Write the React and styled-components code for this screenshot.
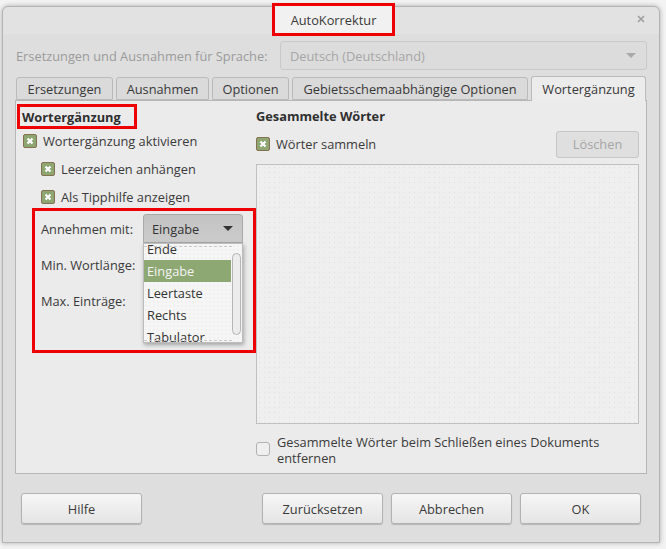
import React from "react";
import styled, { createGlobalStyle } from "styled-components";

const Global = createGlobalStyle`
  html, body { margin: 0; padding: 0; background: #f3f3f3; }
  body { font-family: "Open Sans", "Noto Sans", sans-serif; font-size: 12.8px; color: #3c3c3c; }
  * { box-sizing: border-box; }
`;

const Page = styled.div`
  width: 666px;
  height: 549px;
  padding: 6px 0 0 2px;
  background: #f3f3f3;
`;

const Window = styled.div`
  width: 658px;
  height: 537px;
  background: #dedede;
  border: 1px solid #b4b4b4;
  border-radius: 6px 6px 0 0;
  box-shadow: 0 0 5px rgba(0, 0, 0, 0.3);
  display: flex;
  flex-direction: column;
`;

const TitleBar = styled.div`
  height: 27px;
  flex: none;
  position: relative;
  background: #e2e2e2;
  border-radius: 6px 6px 0 0;
`;

const Highlight = styled.div`
  border: 3px solid #ee0000;
`;

const TitleBox = styled(Highlight)`
  position: absolute;
  left: 269px;
  top: -4px;
  width: 123px;
  height: 33px;
  background: #f1f1f1;
  display: flex;
  align-items: center;
  justify-content: center;
  color: #3a3a3a;
`;

const Close = styled.div`
  position: absolute;
  left: 634px;
  top: 8px;
  width: 8px;
  height: 8px;
  display: flex;
`;

const Body = styled.div`
  flex: 1;
  padding: 7px 12px 0 12px;
  display: flex;
  flex-direction: column;
`;

const LangRow = styled.div`
  display: flex;
  align-items: center;
  gap: 12px;
  height: 29px;
  padding-left: 1px;
`;

const DimLabel = styled.div`
  flex: none;
  width: 252px;
  color: #9b9b9b;
  white-space: nowrap;
`;

const Combo = styled.div`
  flex: 1;
  height: 29px;
  border: 1px solid #c9c9c9;
  border-radius: 3px;
  background: #dcdcdc;
  display: flex;
  align-items: center;
  justify-content: space-between;
  padding: 0 10px 0 9px;
  color: #a6a6a6;
`;

const Arrow = styled.span`
  width: 0;
  height: 0;
  border-left: 5px solid transparent;
  border-right: 5px solid transparent;
  border-top: 5px solid ${(p) => p.$c || "#a9a9a9"};
`;

const Tabs = styled.div`
  display: flex;
  gap: 3px;
  margin-top: 6px;
  padding-left: 1px;
  align-items: flex-end;
  height: 24px;
  flex: none;
`;

const Tab = styled.div`
  width: ${(p) => p.$w}px;
  height: ${(p) => (p.$active ? "25px" : "23px")};
  margin-bottom: ${(p) => (p.$active ? "-1px" : "0")};
  border: 1px solid #bababa;
  border-bottom: ${(p) => (p.$active ? "none" : "1px solid #bababa")};
  border-radius: 3px 3px 0 0;
  background: ${(p) => (p.$active ? "#ececec" : "#dadada")};
  display: flex;
  align-items: center;
  justify-content: center;
  white-space: nowrap;
  color: #383838;
  position: relative;
  z-index: ${(p) => (p.$active ? 2 : 1)};
`;

const Panel = styled.div`
  flex: none;
  height: 374px;
  border: 1px solid #b6b6b6;
  background: #ebebeb;
  display: grid;
  grid-template-columns: 240px 1fr;
  padding: 0 7px 0 0;
`;

const LeftCol = styled.div`
  display: flex;
  flex-direction: column;
`;

const SectionBox = styled(Highlight)`
  margin: 3px 0 0 1px;
  width: 120px;
  height: 25px;
  display: flex;
  align-items: center;
  padding-left: 2px;
  font-weight: 700;
  color: #2f2f2f;
`;

const CheckList = styled.div`
  display: flex;
  flex-direction: column;
  gap: 6px;
  margin-top: 1px;
`;

const CheckRow = styled.div`
  display: flex;
  align-items: center;
  gap: 6px;
  height: 22px;
  padding-left: ${(p) => p.$indent || 0}px;
  color: #3a3a3a;
  white-space: nowrap;
`;

const Box = styled.div`
  width: 14px;
  height: 14px;
  flex: none;
  border: 1px solid ${(p) => (p.$on ? "#85704f" : "#b2b2b2")};
  border-radius: ${(p) => (p.$on ? "2px" : "3px")};
  background: ${(p) => (p.$on ? "#8ea672" : "#efefef")};
  display: flex;
  align-items: center;
  justify-content: center;
  margin-top: ${(p) => p.$mt || 0}px;
`;

const Check = ({ on, mt }) => (
  <Box $on={on} $mt={mt}>
    {on && (
      <svg width="8" height="8" viewBox="0 0 8 8">
        <path d="M1.5 1.5L6.5 6.5M6.5 1.5L1.5 6.5" stroke="#ffffff" strokeWidth="2.2" />
      </svg>
    )}
  </Box>
);

const AcceptBox = styled(Highlight)`
  margin-left: 16px;
  width: 224px;
  height: 145px;
  padding: 3px 0 0 6px;
  display: grid;
  grid-template-columns: 102px 100px;
  grid-template-rows: 29px 44px 28px;
  align-content: start;
  position: relative;
`;

const FieldLabel = styled.div`
  display: flex;
  align-items: center;
  color: #3a3a3a;
  white-space: nowrap;
`;

const DropButton = styled.div`
  height: 29px;
  background: linear-gradient(#c3c3c3, #cbcbcb);
  border: 1px solid #a9a9a9;
  border-radius: 3px 3px 0 0;
  display: flex;
  align-items: center;
  justify-content: space-between;
  padding: 0 9px 0 8px;
  color: #333333;
`;

const List = styled.div`
  position: absolute;
  left: 108px;
  top: 32px;
  width: 100px;
  height: 100px;
  background-color: #f6f6f6;
  background-image: radial-gradient(#e9e9e9 0.6px, transparent 0.8px);
  background-size: 4px 4px;
  border: 1px solid #bdbdbd;
  box-shadow: 1px 2px 4px rgba(0, 0, 0, 0.3);
  overflow: hidden;
  &::before,
  &::after {
    content: "";
    position: absolute;
    left: 0;
    right: 10px;
    border-top: 1px dashed #c9c9c9;
    z-index: 1;
  }
  &::before { top: 2px; }
  &::after { bottom: 1px; }
`;

const ListInner = styled.div`
  margin-top: -6px;
  margin-right: 11px;
`;

const Item = styled.div`
  height: 22px;
  display: flex;
  align-items: center;
  padding-left: 3px;
  color: ${(p) => (p.$sel ? "#f4f4f4" : "#333333")};
  background: ${(p) => (p.$sel ? "#8ea873" : "transparent")};
`;

const Scroll = styled.div`
  position: absolute;
  right: 1px;
  top: 9px;
  width: 9px;
  height: 82px;
  border: 1px solid #b5b5b5;
  border-radius: 5px;
  background: #ececec;
`;

const RightCol = styled.div`
  display: flex;
  flex-direction: column;
`;

const SectionTitle = styled.div`
  height: 30px;
  display: flex;
  align-items: center;
  font-weight: 700;
  color: #2f2f2f;
`;

const CollectRow = styled.div`
  display: flex;
  align-items: center;
  justify-content: space-between;
  height: 26px;
`;

const Btn = styled.div`
  flex: none;
  height: ${(p) => p.$h || 31}px;
  width: ${(p) => p.$w || 121}px;
  border: 1px solid ${(p) => (p.$disabled ? "#c6c6c6" : "#b2b2b2")};
  border-radius: 3px;
  background: ${(p) => (p.$disabled ? "#dfdfdf" : "linear-gradient(#f6f6f6, #e5e5e5)")};
  box-shadow: ${(p) => (p.$disabled ? "none" : "0 1px 1px rgba(0, 0, 0, 0.18)")};
  color: ${(p) => (p.$disabled ? "#a5a5a5" : "#3a3a3a")};
  display: flex;
  align-items: center;
  justify-content: center;
`;

const WordList = styled.div`
  margin-top: 7px;
  height: 260px;
  border: 1px solid #c0c0c0;
  background-color: #efefef;
  background-image: radial-gradient(#e1e1e1 0.6px, transparent 0.8px);
  background-size: 5px 5px;
`;

const RemoveRow = styled.div`
  display: flex;
  gap: 7px;
  margin-top: 10px;
  line-height: 16px;
  align-items: flex-start;
  color: #3a3a3a;
`;

const Footer = styled.div`
  display: flex;
  align-items: center;
  padding: 0 6px;
  margin-top: 19px;
  gap: 8px;
`;

const Spacer = styled.div`
  flex: 1;
`;

export default function App() {
  return (
    <>
      <Global />
      <Page>
        <Window>
          <TitleBar>
            <TitleBox>AutoKorrektur</TitleBox>
            <Close>
              <svg width="8" height="8" viewBox="0 0 8 8">
                <path d="M1 1L7 7M7 1L1 7" stroke="#9d9d9d" strokeWidth="1.6" />
              </svg>
            </Close>
          </TitleBar>
          <Body>
            <LangRow>
              <DimLabel>Ersetzungen und Ausnahmen für Sprache:</DimLabel>
              <Combo>
                <span>Deutsch (Deutschland)</span>
                <Arrow />
              </Combo>
            </LangRow>
            <Tabs>
              <Tab $w={97}>Ersetzungen</Tab>
              <Tab $w={93}>Ausnahmen</Tab>
              <Tab $w={77}>Optionen</Tab>
              <Tab $w={236}>Gebietsschemaabhängige Optionen</Tab>
              <Tab $w={115} $active>
                Wortergänzung
              </Tab>
            </Tabs>
            <Panel>
              <LeftCol>
                <SectionBox>Wortergänzung</SectionBox>
                <CheckList>
                  <CheckRow $indent={7}>
                    <Check on />
                    <span>Wortergänzung aktivieren</span>
                  </CheckRow>
                  <CheckRow $indent={25}>
                    <Check on />
                    <span>Leerzeichen anhängen</span>
                  </CheckRow>
                  <CheckRow $indent={25}>
                    <Check on />
                    <span>Als Tipphilfe anzeigen</span>
                  </CheckRow>
                </CheckList>
                <AcceptBox>
                  <FieldLabel>Annehmen mit:</FieldLabel>
                  <DropButton>
                    <span>Eingabe</span>
                    <Arrow $c="#333333" />
                  </DropButton>
                  <FieldLabel>Min. Wortlänge:</FieldLabel>
                  <div />
                  <FieldLabel>Max. Einträge:</FieldLabel>
                  <div />
                  <List>
                    <ListInner>
                      <Item>Ende</Item>
                      <Item $sel>Eingabe</Item>
                      <Item>Leertaste</Item>
                      <Item>Rechts</Item>
                      <Item>Tabulator</Item>
                    </ListInner>
                    <Scroll />
                  </List>
                </AcceptBox>
              </LeftCol>
              <RightCol>
                <SectionTitle>Gesammelte Wörter</SectionTitle>
                <CollectRow>
                  <CheckRow>
                    <Check on />
                    <span>Wörter sammeln</span>
                  </CheckRow>
                  <Btn $w={83} $h={27} $disabled>
                    Löschen
                  </Btn>
                </CollectRow>
                <WordList />
                <RemoveRow>
                  <Check mt={8} />
                  <span>
                    Gesammelte Wörter beim Schließen eines Dokuments
                    <br />
                    entfernen
                  </span>
                </RemoveRow>
              </RightCol>
            </Panel>
            <Footer>
              <Btn>Hilfe</Btn>
              <Spacer />
              <Btn>Zurücksetzen</Btn>
              <Btn>Abbrechen</Btn>
              <Btn>OK</Btn>
            </Footer>
          </Body>
        </Window>
      </Page>
    </>
  );
}
